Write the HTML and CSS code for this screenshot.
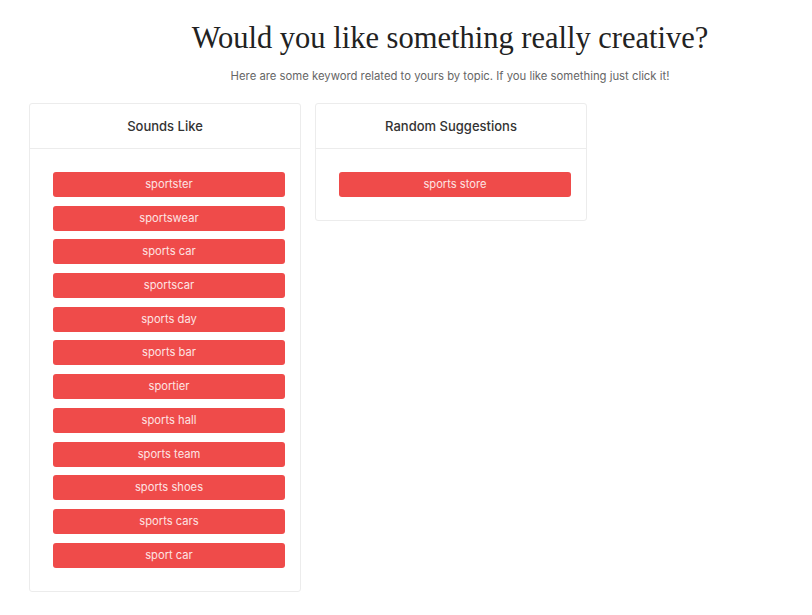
FILE: index.html
```html
<!DOCTYPE html>
<html lang="en">
<head>
<meta charset="utf-8">
<title>Would you like something really creative?</title>
<link rel="stylesheet" href="styles.css">
</head>
<body>
<header class="intro">
  <h1 class="title">Would you like something really creative?</h1>
  <p class="subtitle">Here are some keyword related to yours by topic. If you like something just click it!</p>
</header>
<main class="cards">
  <section class="card">
    <h2 class="card-head">Sounds Like</h2>
    <div class="card-body">
      <a class="kw" href="#">sportster</a>
      <a class="kw" href="#">sportswear</a>
      <a class="kw" href="#">sports car</a>
      <a class="kw" href="#">sportscar</a>
      <a class="kw" href="#">sports day</a>
      <a class="kw" href="#">sports bar</a>
      <a class="kw" href="#">sportier</a>
      <a class="kw" href="#">sports hall</a>
      <a class="kw" href="#">sports team</a>
      <a class="kw" href="#">sports shoes</a>
      <a class="kw" href="#">sports cars</a>
      <a class="kw" href="#">sport car</a>
    </div>
  </section>
  <section class="card">
    <h2 class="card-head">Random Suggestions</h2>
    <div class="card-body">
      <a class="kw" href="#">sports store</a>
    </div>
  </section>
</main>
</body>
</html>
```
FILE: styles.css
```css
html, body {
  margin: 0;
  padding: 0;
  background: #ffffff;
}
body {
  font-family: "Inter", "Liberation Sans", Arial, sans-serif;
  color: #333;
}
.intro {
  margin-left: 88px;
  padding-top: 18px;
  text-align: center;
}
.title {
  margin: 0;
  font-family: "Liberation Serif", "Times New Roman", serif;
  font-weight: 400;
  font-size: 30.5px;
  line-height: 40px;
  color: #222;
}
.subtitle {
  margin: 10px 0 0;
  font-size: 11.3px;
  line-height: 16px;
  color: #666;
}
.cards {
  display: flex;
  align-items: flex-start;
  gap: 14px;
  margin: 19px 0 0 29px;
}
.card {
  width: 270px;
  border: 1px solid #ececec;
  border-radius: 3px;
  background: #fff;
}
.card-head {
  margin: 0;
  height: 44px;
  line-height: 44px;
  text-align: center;
  font-size: 13px;
  font-weight: 500;
  color: #333;
  border-bottom: 1px solid #ececec;
}
.card-body {
  display: flex;
  flex-direction: column;
  gap: 8.7px;
  padding: 23px 15px 23px 23px;
}
.kw {
  display: block;
  height: 25px;
  line-height: 25px;
  text-align: center;
  background: #ef4b4a;
  color: #fde3e3;
  border-radius: 3px;
  font-size: 11.2px;
  text-decoration: none;
}
```
